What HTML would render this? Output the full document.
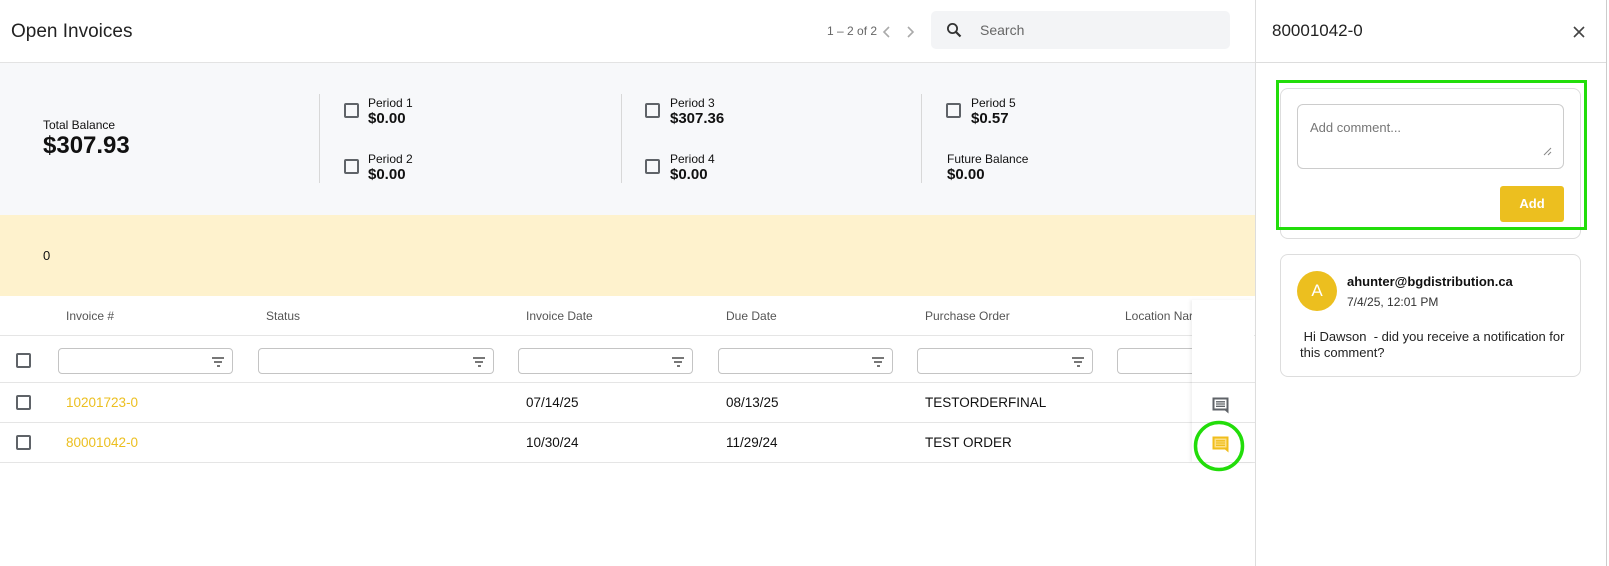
<!DOCTYPE html>
<html><head><meta charset="utf-8"><style>
*{box-sizing:border-box;margin:0;padding:0}
body{width:1609px;height:566px;background:#fff;font-family:"Liberation Sans",sans-serif;color:#111;position:relative;overflow:hidden}
.a{position:absolute;white-space:nowrap}
.cb{position:absolute;width:15px;height:15px;border:2px solid #5f6368;border-radius:2px}
.lbl{font-size:12px;color:#111}
.val{font-size:15px;font-weight:bold;color:#111}
.th{font-size:12px;color:#555;top:309px}
.inp{position:absolute;top:348px;height:26px;border:1px solid #c4c4c4;border-radius:4px;background:#fff}
.fi{position:absolute;right:8px;top:8px;width:12px}
.fi i{display:block;height:1.5px;background:#777;margin:0 auto 2.5px}
.hl{position:absolute;left:0;width:1255px;height:1px;background:#e5e5e5}
.td{font-size:13.5px;color:#111}
</style></head><body>
<div class="a" style="left:11px;top:21px;font-size:19px;color:#222">Open Invoices</div>
<div class="a" style="left:827px;top:24px;font-size:12px;color:#666">1 – 2 of 2</div>
<svg class="a" style="left:880px;top:23px" width="40" height="18"><path d="M9 4 L4 9 L9 14" stroke="#aaa" stroke-width="1.6" fill="none"/><path d="M28 4 L33 9 L28 14" stroke="#aaa" stroke-width="1.6" fill="none"/></svg>
<div class="a" style="left:931px;top:11px;width:299px;height:38px;background:#f3f4f6;border-radius:5px"></div>
<svg class="a" style="left:946px;top:22px" width="16" height="16"><circle cx="6.5" cy="6.5" r="4.6" stroke="#333" stroke-width="1.8" fill="none"/><path d="M10 10 L14.5 14.5" stroke="#333" stroke-width="2.2"/></svg>
<div class="a" style="left:980px;top:22px;font-size:14px;color:#666">Search</div>
<div class="a" style="left:0;top:62px;width:1255px;height:1px;background:#e3e3e3"></div>
<div class="a" style="left:0;top:63px;width:1255px;height:152px;background:#f7f8fa"></div>
<div class="a" style="left:0;top:215px;width:1255px;height:81px;background:#fef2cd"></div>
<div class="a" style="left:43px;top:248px;font-size:13px">0</div>
<div class="a lbl" style="left:43px;top:118px">Total Balance</div>
<div class="a" style="left:43px;top:132px;font-size:24px;font-weight:bold">$307.93</div>
<div class="a" style="left:319px;top:94px;width:1px;height:89px;background:#d8d8d8"></div>
<div class="a" style="left:621px;top:94px;width:1px;height:89px;background:#d8d8d8"></div>
<div class="a" style="left:921px;top:94px;width:1px;height:89px;background:#d8d8d8"></div>
<div class="cb" style="left:344px;top:103px"></div><div class="a lbl" style="left:368px;top:96px">Period 1</div><div class="a val" style="left:368px;top:110px">$0.00</div>
<div class="cb" style="left:344px;top:159px"></div><div class="a lbl" style="left:368px;top:152px">Period 2</div><div class="a val" style="left:368px;top:166px">$0.00</div>
<div class="cb" style="left:645px;top:103px"></div><div class="a lbl" style="left:670px;top:96px">Period 3</div><div class="a val" style="left:670px;top:110px">$307.36</div>
<div class="cb" style="left:645px;top:159px"></div><div class="a lbl" style="left:670px;top:152px">Period 4</div><div class="a val" style="left:670px;top:166px">$0.00</div>
<div class="cb" style="left:946px;top:103px"></div><div class="a lbl" style="left:971px;top:96px">Period 5</div><div class="a val" style="left:971px;top:110px">$0.57</div>
<div class="a lbl" style="left:947px;top:152px">Future Balance</div><div class="a val" style="left:947px;top:166px">$0.00</div>

<div class="a th" style="left:66px">Invoice #</div>
<div class="a th" style="left:266px">Status</div>
<div class="a th" style="left:526px">Invoice Date</div>
<div class="a th" style="left:726px">Due Date</div>
<div class="a th" style="left:925px">Purchase Order</div>
<div class="a th" style="left:1125px">Location Nar</div>
<div class="hl" style="top:335px"></div>
<div class="cb" style="left:16px;top:353px"></div>
<div class="inp" style="left:58px;width:175px"><div class="fi"><i style="width:12px"></i><i style="width:8px"></i><i style="width:3px"></i></div></div>
<div class="inp" style="left:258px;width:236px"><div class="fi"><i style="width:12px"></i><i style="width:8px"></i><i style="width:3px"></i></div></div>
<div class="inp" style="left:518px;width:175px"><div class="fi"><i style="width:12px"></i><i style="width:8px"></i><i style="width:3px"></i></div></div>
<div class="inp" style="left:718px;width:175px"><div class="fi"><i style="width:12px"></i><i style="width:8px"></i><i style="width:3px"></i></div></div>
<div class="inp" style="left:917px;width:176px"><div class="fi"><i style="width:12px"></i><i style="width:8px"></i><i style="width:3px"></i></div></div>
<div class="inp" style="left:1117px;width:100px"></div>
<div class="hl" style="top:382px"></div>
<div class="cb" style="left:16px;top:395px"></div>
<div class="a td" style="left:66px;top:395px;color:#ecbf1f">10201723-0</div>
<div class="a td" style="left:526px;top:395px">07/14/25</div>
<div class="a td" style="left:726px;top:395px">08/13/25</div>
<div class="a td" style="left:925px;top:395px">TESTORDERFINAL</div>
<div class="hl" style="top:422px"></div>
<div class="cb" style="left:16px;top:435px"></div>
<div class="a td" style="left:66px;top:435px;color:#ecbf1f">80001042-0</div>
<div class="a td" style="left:526px;top:435px">10/30/24</div>
<div class="a td" style="left:726px;top:435px">11/29/24</div>
<div class="a td" style="left:925px;top:435px">TEST ORDER</div>
<div class="hl" style="top:462px"></div>
<div class="a" style="left:1192px;top:300px;width:62px;height:162px;background:#fff;box-shadow:-2px 0 3px rgba(0,0,0,.06)"></div>
<div class="a" style="left:1192px;top:382px;width:62px;height:1px;background:#e5e5e5"></div>
<div class="a" style="left:1192px;top:422px;width:62px;height:1px;background:#e5e5e5"></div>
<svg class="a" style="left:1211px;top:396px" width="20" height="20"><path d="M1.5 1.5 H17.5 V17.5 L14 14.5 H1.5 Z" fill="#5f6368"/><rect x="3.5" y="3.5" width="12" height="9" fill="#fff"/><path d="M5 5.8H14M5 8H14M5 10.3H14" stroke="#5f6368" stroke-width="1.3"/></svg>
<svg class="a" style="left:1211px;top:435px" width="20" height="20"><path d="M1.5 1.5 H17.5 V17.5 L14 14.5 H1.5 Z" fill="#f0be1c"/><rect x="3.5" y="3.5" width="12" height="9" fill="#fde08a"/><path d="M5 5.8H14M5 8H14M5 10.3H14" stroke="#f0be1c" stroke-width="1.3"/></svg>
<svg class="a" style="left:1192px;top:419px" width="56" height="56"><circle cx="27" cy="27" r="23.5" stroke="#22dd0a" stroke-width="3.5" fill="none"/></svg>

<div class="a" style="left:1255px;top:0;width:1px;height:566px;background:#ddd"></div>
<div class="a" style="left:1606px;top:0;width:1px;height:566px;background:#ccc"></div>
<div class="a" style="left:1272px;top:21px;font-size:17px;color:#222">80001042-0</div>
<svg class="a" style="left:1573px;top:26px" width="12" height="12"><path d="M1 1L11 11M11 1L1 11" stroke="#444" stroke-width="1.6"/></svg>
<div class="a" style="left:1256px;top:62px;width:350px;height:1px;background:#ddd"></div>
<div class="a" style="left:1280px;top:88px;width:301px;height:151px;border:1px solid #ddd;border-radius:8px"></div>
<div class="a" style="left:1297px;top:104px;width:267px;height:65px;border:1px solid #ccc;border-radius:6px"></div>
<div class="a" style="left:1310px;top:120px;font-size:13px;color:#777">Add comment...</div>
<svg class="a" style="left:1543px;top:147px" width="10" height="10"><path d="M1 8L8 1M5 8L8 5" stroke="#888" stroke-width="1"/></svg>
<div class="a" style="left:1500px;top:186px;width:64px;height:36px;background:#ecbf1f;border-radius:3px;color:#fff;font-size:13px;font-weight:bold;text-align:center;line-height:36px">Add</div>
<div class="a" style="left:1276px;top:80px;width:311px;height:150px;border:3.5px solid #22dd0a"></div>
<div class="a" style="left:1280px;top:254px;width:301px;height:123px;border:1px solid #ddd;border-radius:8px"></div>
<div class="a" style="left:1297px;top:271px;width:40px;height:40px;border-radius:50%;background:#ecbf1f;color:#fff;font-size:17px;text-align:center;line-height:40px">A</div>
<div class="a" style="left:1347px;top:274px;font-size:13px;font-weight:bold;color:#111">ahunter@bgdistribution.ca</div>
<div class="a" style="left:1347px;top:295px;font-size:12px;color:#333">7/4/25, 12:01 PM</div>
<div class="a" style="left:1300px;top:329px;font-size:13px;color:#222;line-height:16px;white-space:normal;width:265px">&nbsp;Hi Dawson &nbsp;- did you receive a notification for this comment?</div>
</body></html>
